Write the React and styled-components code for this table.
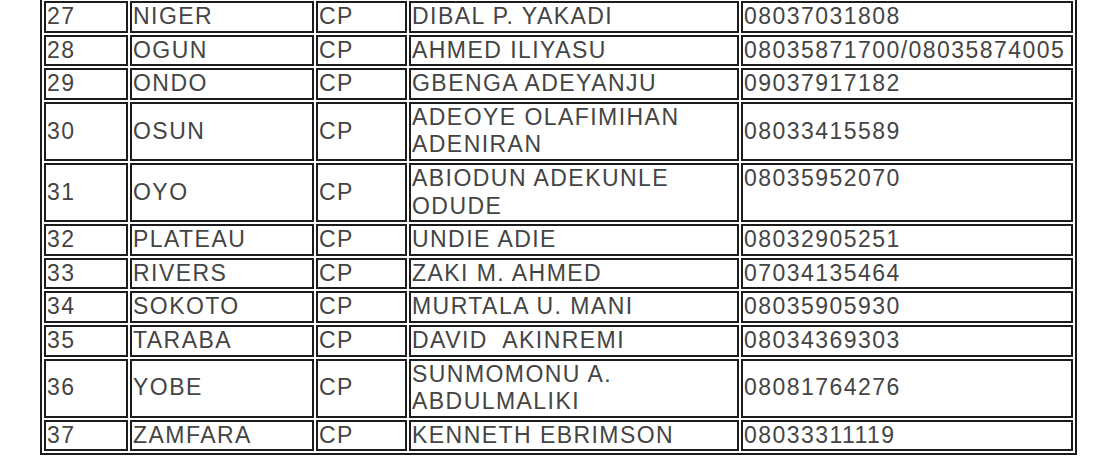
import React from "react";
import styled, { createGlobalStyle } from "styled-components";

const GlobalStyle = createGlobalStyle`
  html, body {
    margin: 0;
    padding: 0;
    background: #ffffff;
  }
  body {
    font-family: "Liberation Sans", Arial, sans-serif;
    overflow: hidden;
  }
`;

const Page = styled.div`
  padding: 0 0 0 40px;
  margin-top: -3px;
`;

const Table = styled.table`
  border: 2px solid #1c1c1c;
  border-collapse: separate;
  border-spacing: 2px;
  width: 1037px;
  box-sizing: border-box;
`;

const Cell = styled.td`
  box-sizing: border-box;
  width: ${(p) => p.$w}px;
  border: 2px solid #1c1c1c;
  padding: 0 0 0 1px;
  font-size: 23px;
  letter-spacing: 1.45px;
  line-height: 27.6px;
  color: #444444;
  vertical-align: ${(p) => p.$valign || "middle"};
  white-space: pre-wrap;
  text-align: left;
`;

const widths = [84, 184, 91, 330, 332];

const rows = [
  ["27", "NIGER", "CP", "DIBAL P. YAKADI", "08037031808"],
  ["28", "OGUN", "CP", "AHMED ILIYASU", "08035871700/08035874005"],
  ["29", "ONDO", "CP", "GBENGA ADEYANJU", "09037917182"],
  ["30", "OSUN", "CP", "ADEOYE OLAFIMIHAN ADENIRAN", "08033415589"],
  ["31", "OYO", "CP", "ABIODUN ADEKUNLE ODUDE", "08035952070", "top"],
  ["32", "PLATEAU", "CP", "UNDIE ADIE", "08032905251"],
  ["33", "RIVERS", "CP", "ZAKI M. AHMED", "07034135464"],
  ["34", "SOKOTO", "CP", "MURTALA U. MANI", "08035905930"],
  ["35", "TARABA", "CP", "DAVID  AKINREMI", "08034369303"],
  ["36", "YOBE", "CP", "SUNMOMONU A. ABDULMALIKI", "08081764276"],
  ["37", "ZAMFARA", "CP", "KENNETH EBRIMSON", "08033311119"],
];

export default function App() {
  return (
    <>
      <GlobalStyle />
      <Page>
        <Table>
          <tbody>
            {rows.map((r) => (
              <tr key={r[0]}>
                {r.slice(0, 5).map((c, i) => (
                  <Cell key={i} $w={widths[i]} $valign={i === 4 ? r[5] : undefined}>
                    {c}
                  </Cell>
                ))}
              </tr>
            ))}
          </tbody>
        </Table>
      </Page>
    </>
  );
}
